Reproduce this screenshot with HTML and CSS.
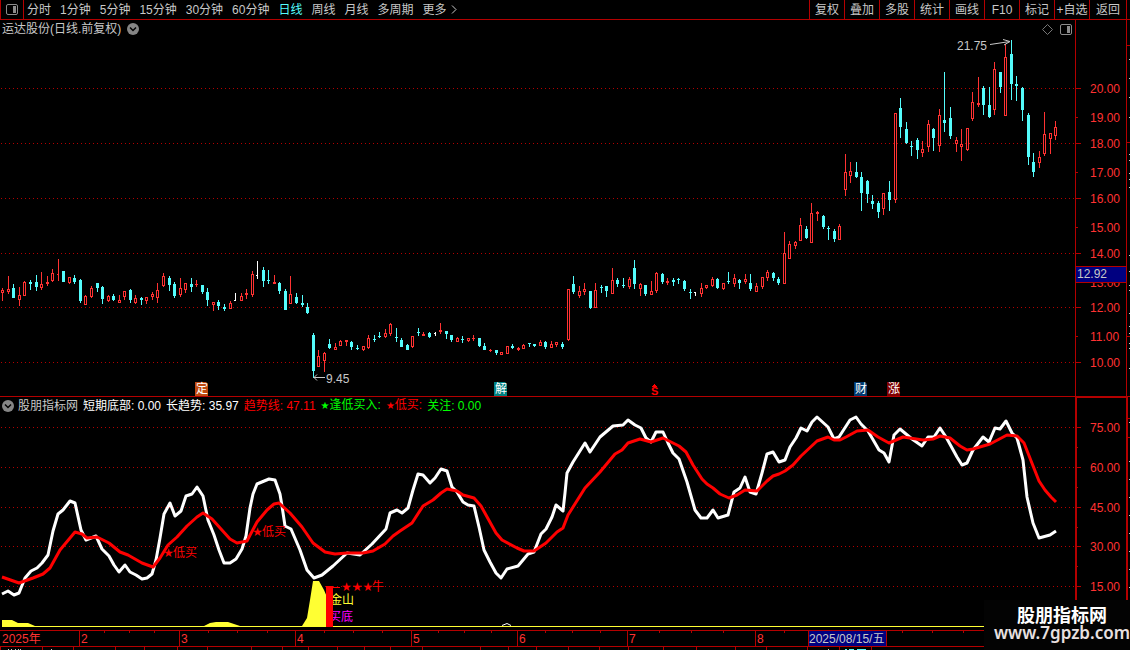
FILE: index.html
```html
<!DOCTYPE html>
<html lang="zh-CN">
<head>
<meta charset="utf-8">
<title>运达股份 日线</title>
<link rel="stylesheet" href="styles.css">
</head>
<body>
<header class="toolbar">
  <button class="tool-toggle" aria-label="侧栏">
    <svg width="13" height="11" viewBox="0 0 13 11"><rect x="0.5" y="0.5" width="11" height="10" rx="1.5" fill="none" stroke="#8c8c8c"/><rect x="7" y="2" width="3" height="7" fill="#8c8c8c"/></svg>
  </button>
  <nav class="periods">
    <button>分时</button><button>1分钟</button><button>5分钟</button><button>15分钟</button><button>30分钟</button><button>60分钟</button><button class="active">日线</button><button>周线</button><button>月线</button><button>多周期</button>
    <button class="more">更多<svg width="6" height="9" viewBox="0 0 6 9"><path d="M1 0.5L5 4.5L1 8.5" fill="none" stroke="#c8c8c8"/></svg></button>
  </nav>
  <div class="actions">
    <button>复权</button><button>叠加</button><button>多股</button><button>统计</button><button>画线</button><button>F10</button><button>标记</button><button>+自选</button><button>返回</button>
  </div>
  <div class="edge"></div>
</header>

<main>
  <section class="panel">
    <div class="panel-head price-head">
      <div class="title">
        <h1>运达股份(日线.前复权)</h1>
        <button class="round" aria-label="展开"><svg width="12" height="12" viewBox="0 0 12 12"><circle cx="6" cy="6" r="6" fill="#858585"/><path d="M3 4.5L6 7.5L9 4.5" fill="none" stroke="#000" stroke-width="1.5"/></svg></button>
        <div class="marks">
          <svg width="11" height="11" viewBox="0 0 11 11"><path d="M5.5 0.5L10.500 5.500L5.500 10.500L0.500 5.500Z" fill="none" stroke="#777"/></svg>
          <svg width="13" height="11" viewBox="0 0 13 11"><rect x="0.5" y="0.5" width="11" height="10" rx="1.500" fill="none" stroke="#8c8c8c"/><rect x="7" y="2" width="3" height="7" fill="#8c8c8c"/></svg>
        </div>
      </div>
      <div class="axis-top"></div>
      <div class="edge"></div>
    </div>
    <svg class="chart" id="price" viewBox="0 38 1130 359" role="img" aria-label="日线K线图"></svg>
  </section>

  <section class="panel">
    <div class="panel-head indicator-head">
      <div class="legend">
        <button class="round" aria-label="展开"><svg width="12" height="12" viewBox="0 0 12 12"><circle cx="6" cy="6" r="6" fill="#858585"/><path d="M3 4.5L6 7.5L9 4.5" fill="none" stroke="#000" stroke-width="1.5"/></svg></button>
        <span class="name">股朋指标网</span>
        <span class="white">短期底部: 0.00</span>
        <span class="white">长趋势: 35.97</span>
        <span class="red">趋势线: 47.11</span>
        <span class="green"><i>★</i>逢低买入:</span>
        <span class="red"><i>★</i>低买:</span>
        <span class="green">关注: 0.00</span>
      </div>
      <div class="axis-top"></div>
      <div class="edge"></div>
    </div>
    <svg class="chart" id="indicator" viewBox="0 414 1130 216" role="img" aria-label="指标图"></svg>
  </section>

  <svg class="chart" id="timeline" viewBox="0 630 1130 20" role="img" aria-label="时间轴"></svg>
</main>

<aside class="brand">
  <strong>股朋指标网</strong>
  <span>www.7gpzb.com</span>
</aside>
<script src="chart.js"></script>
</body>
</html>
```

FILE: styles.css
```css
* { box-sizing: border-box; }

body {
  margin: 0;
  position: relative;
  background: #000;
  color: #c8c8c8;
  font: 12px/18px "Liberation Sans", "Noto Sans CJK SC", sans-serif;
  overflow-x: hidden;
}

button {
  margin: 0;
  padding: 0;
  border: 0;
  background: none;
  color: inherit;
  font: inherit;
  white-space: nowrap;
  cursor: pointer;
}

svg { display: block; }

.toolbar {
  display: flex;
  height: 20px;
  border-bottom: 1px solid #b40000;
}

.tool-toggle {
  display: flex;
  align-items: center;
  justify-content: center;
  width: 24px;
  border: solid #b40000;
  border-width: 0 1px;
}

.periods {
  display: flex;
  gap: 9px;
  padding-left: 3px;
  flex: 1;
}

.periods .active { color: #54fcfc; }

.more {
  display: flex;
  align-items: center;
  gap: 4px;
}

.actions { display: flex; }

.actions button {
  width: 35px;
  border-left: 1px solid #b40000;
}

.actions button:last-child { width: 37px; }

.edge {
  width: 4px;
  border-left: 1px solid #b40000;
}

.panel-head {
  display: grid;
  grid-template-columns: 1fr 51px 4px;
}

.price-head { height: 18px; }

.title {
  display: flex;
  align-items: center;
  gap: 6px;
  padding: 0 2px;
}

.title h1 {
  margin: 0;
  font: inherit;
}

.marks {
  display: flex;
  gap: 7px;
  margin-left: auto;
}

.axis-top { border-left: 1px solid #b40000; }

.indicator-head { height: 17px; }

.indicator-head .axis-top {
  border-left-width: 2px;
  border-top: 1px solid #b40000;
}

.indicator-head .edge { border-left-width: 2px; }

.legend {
  display: flex;
  align-items: center;
  gap: 5px;
  padding-left: 2px;
  line-height: 16px;
  white-space: nowrap;
}

.legend .name { margin-left: -1px; }
.legend i { font: 10px/16px "DejaVu Sans", sans-serif; }
.white { color: #fff; }
.red { color: #f00; }
.green { color: #0f0; }

.chart {
  width: 100%;
  height: auto;
  font-size: 12px;
}

.chart .star { font-family: "DejaVu Sans", sans-serif; }

.brand {
  position: absolute;
  right: 0;
  bottom: 0;
  display: flex;
  flex-direction: column;
  align-items: center;
  width: 146px;
  height: 50px;
  padding: 4px 0 0 10px;
  background: #030303;
  color: #fff;
}

.brand strong {
  font: bold 18px/20px "Noto Sans CJK SC", sans-serif;
}

.brand span {
  color: #e8e0e0;
  font: 600 17px/18px "Noto Sans", sans-serif;
}
```

FILE: chart.js
```js
const RED = '#ff3232', CYAN = '#54fcfc', LINE = '#b40000', GREY = '#c8c8c8';
const text = (x, y, s, fill, extra = '') => `<text x="${x}" y="${y}" fill="${fill}" ${extra}>${s}</text>`;
const rect = (x, y, w, h, fill) => `<rect x="${x}" y="${y}" width="${w}" height="${h}" fill="${fill}"/>`;
const grid = y => `<path d="M1 ${y}.5H1075" stroke="${LINE}" stroke-dasharray="1 3" shape-rendering="crispEdges"/>`;

/* type, high, body top, body bottom, low; one entry per trading day */
const days = `r288,290,293,301 r276,289,292,294 c284,288,298,298 r287,295,300,306 r281,282,296,296 c280,282,284,290
c275,282,287,291 r272,284,288,290 r276,282,284,286 r269,273,281,282 t259,274,275,281 c271,271,282,282
r277,277,283,284 c275,278,282,284 c279,280,301,303 r295,296,305,305 r286,288,297,298 c283,283,288,292
c286,287,299,304 r295,296,301,302 c294,296,300,301 r295,300,303,303 r291,291,297,300 c289,290,300,303
r295,298,303,304 c297,298,300,305 r297,297,301,304 r292,294,297,300 r283,290,298,303 r273,276,286,287
c276,278,285,291 c282,284,296,298 r278,288,295,297 r283,283,290,293 c278,284,287,292 r280,284,285,287
c285,285,292,294 c288,292,300,306 r302,302,305,311 c300,302,306,310 c304,307,309,311 r301,303,309,309
w293,300,301,301 r293,296,301,301 r289,293,295,299 r271,274,295,297 w261,275,276,279 c267,270,281,287
c270,280,281,284 r275,282,284,284 c282,283,291,294 c289,291,310,310 r276,294,304,304 c293,297,303,304
c295,303,305,307 c303,307,313,314 c333,335,371,378 r350,356,367,367 r352,353,361,372 c339,344,348,349
r343,347,350,350 r340,341,346,346 r340,340,342,346 c341,342,347,350 c345,348,349,350 r346,346,350,351
r335,338,348,349 c335,339,340,342 c332,336,337,338 r329,333,337,338 r323,324,334,336 c328,337,338,342
c338,340,347,347 c344,345,350,350 r336,336,347,348 c328,332,333,336 r332,334,336,336 c332,333,337,338
w332,333,334,336 r323,330,332,334 c331,331,334,339 c335,335,340,342 r337,338,342,342 c336,339,340,343
r338,338,341,342 r335,338,339,341 c338,338,346,347 c343,346,350,350 r349,350,351,352 c350,350,353,355
r352,352,355,355 r346,346,354,354 c344,346,348,349 r347,348,350,351 r344,345,349,349 c343,343,344,347
c344,344,346,347 r340,342,346,346 c341,342,347,349 r341,344,348,348 r342,342,345,347 c342,344,347,349
r289,289,340,341 c276,284,292,294 r286,291,296,298 r283,289,292,295 c291,291,308,309 r283,290,308,308
c285,287,288,293 c286,286,291,297 r268,280,294,294 c278,280,284,287 c278,285,286,288 r277,279,287,289
c260,268,284,289 r283,284,289,296 c285,285,294,296 r281,291,295,295 r272,273,291,293 c273,274,282,284
r278,281,283,285 c278,280,282,286 c278,279,280,284 c280,281,289,291 c289,292,293,299 w292,292,293,296
r283,288,294,297 r285,285,288,289 r277,279,286,287 c278,279,288,289 r283,283,289,290 c272,281,282,284
r274,278,284,287 c279,280,283,289 r274,279,282,284 c274,283,289,291 r283,286,292,292 r277,277,287,289
r270,272,278,281 c272,273,278,281 c277,279,283,285 r232,253,284,284 r241,244,259,259 r241,242,246,249
r218,225,241,241 c226,229,238,239 r203,213,243,243 r211,212,214,221 c215,216,227,229 c226,228,229,240
c229,231,239,242 r224,226,240,240 r154,172,190,196 r162,171,176,183 c162,172,177,178 c172,177,193,211
c180,181,194,203 c195,201,204,209 c201,203,212,218 r193,193,209,215 c181,192,200,211 r113,113,200,203
c98,108,127,138 c122,129,143,144 c141,146,147,156 c138,140,150,159 r141,149,153,157 r120,124,147,152
c128,129,138,151 r109,115,146,152 c72,120,123,132 c107,118,136,139 r137,140,144,152 r129,144,147,161
r128,128,150,151 r92,102,119,121 r77,103,105,107 c86,88,105,115 c87,105,117,118 r62,69,110,115
c72,72,87,93 r44,57,116,116 c40,54,84,100 c76,84,86,101 c87,88,110,121 c113,115,157,165
c153,162,172,177 r151,157,163,168 r112,134,154,156 r133,133,139,154 r121,127,136,140`.split(/\s+/);

const candles = days.map((d, i) => {
  const x = Math.floor(2.8 + i * 5.542);
  const [hi, top, bot, lo] = d.slice(1).split(',').map(Number);
  if (d[0] === 'w' || d[0] === 't') {
    const c = d[0] === 'w' ? '#fff' : RED;
    return rect(x, hi, 1, lo - hi, c) + rect(x - 1, top, 1, 1, c);
  }
  if (d[0] === 'c') return rect(x, hi, 1, lo - hi, CYAN) + rect(x - 1, top, 3, bot - top, CYAN);
  return rect(x, hi, 1, lo - hi, RED) + rect(x - 1, top, 3, bot - top, RED) +
    (bot - top > 2 ? rect(x, top + 1, 1, bot - top - 2, '#000') : '');
}).join('');

const badge = (x, s, fill) => `<path d="M${x} 382h11l2 2v12h-13z" fill="${fill}"/>` + text(x + 1, 393, s, '#fff');
const edgeMarks = ys => ys.map(y => rect(1129, y, 1, 1, GREY)).join('');

let p = [88, 143, 198, 253, 307, 362].map(grid).join('') + candles;
p += rect(0, 396, 1130, 1, LINE) + rect(1075, 38, 1, 359, LINE) + rect(1126, 38, 1, 359, LINE);
[88, 117, 143, 172, 198, 227, 253, 282, 307, 336, 362].forEach((y, i) => {
  p += text(1090, y + 5, (20 - i) + '.00', RED) + rect(1076, y, i % 2 ? 2 : 5, 1, LINE);
});
p += rect(1076, 266, 50, 17, LINE) + rect(1076, 267, 50, 15, '#000080') + text(1077, 278, '12.92', GREY);
p += text(957, 50, '21.75', GREY) + `<path d="M990 44.500L1010 41.500M1003 39.500L1010 41.500L1004 45" fill="none" stroke="${GREY}"/>`;
p += text(326, 383, '9.45', GREY) + `<path d="M314 377.500H325M317 374.500L314 377.500L317 380.500" fill="none" stroke="${GREY}"/>`;
p += badge(195, '定', '#c04a10') + badge(494, '解', '#008080') + badge(854, '财', '#003a70') + badge(887, '涨', '#800000');
p += text(651, 395, 'S', '#f00', 'style="font-size:11px;font-weight:bold"') + '<path d="M652 386.500H657M654.500 384V387M653 385.500H656" stroke="#f00"/>';
p += edgeMarks([59, 78, 97, 117, 154, 160, 173, 179, 187, 255, 271, 285, 290, 313, 326, 333, 343, 348, 368]) + rect(1126, 45, 4, 1, LINE) + rect(1126, 142, 4, 1, LINE) + rect(1126, 336, 4, 1, LINE);
document.getElementById('price').innerHTML = p;

const longTrend = '2,594 8,591 14,595 19,593 25,578 31,571 37,568 42,563 48,555 53,531 58,514 63,510 70,501 75,503 81,530 86,540 96,536 102,549 109,556 114,565 119,572 125,565 130,572 136,575 142,579 147,578 152,574 156,560 160,538 164,514 170,503 175,516 181,511 186,496 192,494 197,487 203,496 208,520 214,535 219,550 224,563 230,563 236,559 242,549 246,536 250,508 253,494 257,484 269,479 275,480 280,494 282,506 285,526 291,529 300,550 307,570 314,578 322,575 333,566 347,553 360,555 372,544 386,529 390,513 397,510 402,513 408,508 413,490 418,474 423,475 430,483 435,478 441,469 447,471 452,487 457,492 463,502 468,505 474,506 479,527 484,550 490,562 496,573 501,578 507,569 518,566 528,554 534,552 541,534 546,529 552,517 556,505 563,511 565,493 567,473 573,462 585,443 590,452 600,437 613,426 623,425 628,420 635,425 641,428 646,438 651,442 656,432 663,432 668,443 673,453 679,459 687,482 695,510 701,518 707,518 713,510 718,518 728,515 734,492 740,488 745,477 750,492 756,494 762,473 767,454 773,452 779,462 785,460 790,447 796,438 801,428 807,431 812,422 817,417 828,427 834,439 839,437 850,420 856,417 861,424 868,431 879,450 884,453 889,462 894,435 900,429 912,439 922,446 928,437 934,437 940,428 946,437 957,457 962,465 967,463 973,450 983,437 989,442 995,428 1000,429 1006,421 1012,433 1017,438 1023,460 1027,497 1033,523 1039,538 1050,535 1056,531';
const trendLine = '2,577 19,583 33,578 43,574 50,568 60,550 75,532 82,534 87,538 97,537 109,543 120,552 128,555 142,563 153,567 160,558 168,545 177,537 187,526 197,517 203,513 212,519 230,539 237,543 247,541 257,522 267,510 274,504 279,503 290,513 302,527 313,543 325,552 335,554 347,553 363,553 373,551 385,544 393,536 400,531 412,523 423,506 433,500 441,493 447,489 457,491 463,495 474,498 481,506 496,533 502,540 517,548 524,551 534,551 546,543 557,532 563,528 568,515 585,488 600,472 615,454 622,450 628,443 640,439 651,442 663,438 679,446 686,452 693,465 702,479 707,484 713,488 720,494 729,498 737,495 745,490 757,491 767,481 773,476 779,474 785,471 793,465 801,456 817,441 828,437 834,440 840,440 846,437 857,431 868,430 878,437 889,443 903,437 923,440 933,439 940,436 950,438 960,446 967,450 973,449 990,444 1007,435 1017,436 1024,443 1039,481 1045,490 1051,497 1056,502';
const curve = (pts, c) => `<polyline points="${pts}" fill="none" stroke="${c}" stroke-width="3" stroke-linejoin="round"/>`;

let q = [427, 467, 507, 546, 586].map(grid).join('');
q += text(330, 604, '金山', '#ff3') + text(329, 621, '买底', '#f0f');
q += curve(longTrend, '#fff') + curve(trendLine, '#f00');
q += '<path d="M2 627V620H12L18 623H28L35 626H204L210 623L216 622H228L240 626H302L307 618L310 600L313 581H319L324 590L327 597V626H984V627Z" fill="#ff3"/>';
q += rect(326, 586, 7, 41, '#f00') + rect(333, 587, 7, 1, '#f00');
q += text(341, 591, '★★★', '#f00', 'class="star"') + text(372, 591, '牛', '#f00');
[[163, 557], [252, 536]].forEach(([x, y]) => { q += text(x, y, '★', '#f00', 'class="star"') + text(x + 10, y, '低买', '#f00'); });
q += '<path d="M502 625.500L507 623.500L511 625.500" fill="none" stroke="#fff"/>';
q += rect(1075, 414, 2, 216, LINE) + rect(1126, 414, 2, 216, LINE);
[427, 467, 507, 546, 586].forEach((y, i) => { q += text(1090, y + 5, (75 - 15 * i) + '.00', RED) + rect(1077, y, 4, 1, LINE); });
[447, 487, 527, 566].forEach(y => { q += rect(1077, y, 1, 1, LINE); });
q += edgeMarks([422, 461, 479, 497, 515, 533, 551, 569, 587]) + rect(1128, 418, 2, 1, LINE) + rect(1128, 437, 2, 1, LINE);
document.getElementById('indicator').innerHTML = q;

let t = rect(0, 630, 1130, 1, LINE) + rect(0, 646, 1130, 1, LINE);
t += text(2, 643, '2025年', RED);
[79, 179, 295, 411, 517, 627, 755].forEach((x, i) => { t += rect(x, 631, 1, 15, LINE) + text(x + 2, 643, i + 2, RED); });
[104, 129, 154, 208, 237, 267, 324, 353, 382, 438, 464, 491, 545, 572, 600, 659, 691, 723, 784, 902, 932, 963].forEach(x => { t += rect(x, 631, 1, 2, LINE); });
[0, 42, 73, 115, 144, 177, 207, 251, 282, 308, 337, 364, 390, 422, 480, 508, 536, 568, 599, 628, 663, 696, 735, 766, 807, 839, 871].forEach(x => { t += rect(x, 647, 1, 3, LINE); });
t += rect(808, 631, 79, 15, LINE) + rect(809, 631, 77, 15, '#000080') + text(809, 643, '2025/08/15/五', GREY);
[8, 11, 15, 18, 20, 51, 828].forEach(x => { t += rect(x, 649, 1, 1, GREY); });
t += rect(845, 649, 2, 1, CYAN) + rect(849, 649, 5, 1, CYAN) + rect(857, 649, 9, 1, CYAN);
document.getElementById('timeline').innerHTML = t;
```
